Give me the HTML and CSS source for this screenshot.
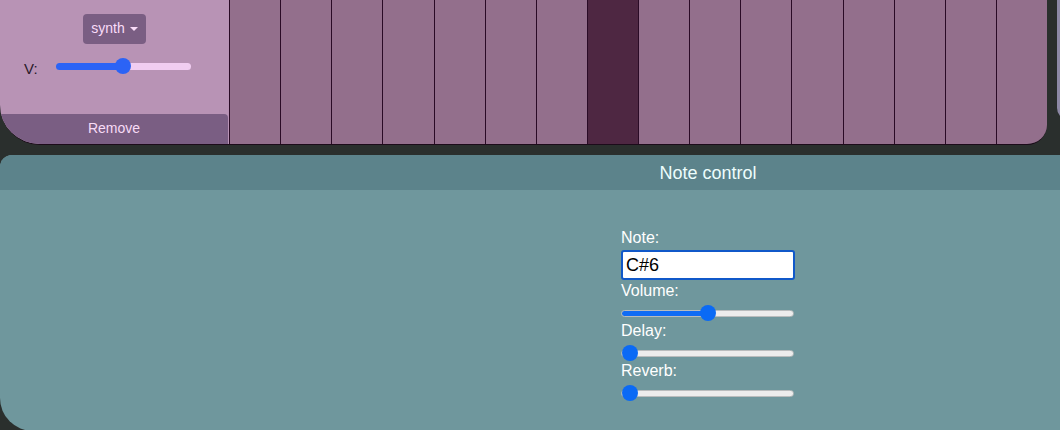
FILE: index.html
```html
<!DOCTYPE html>
<html lang="en">
<head>
<meta charset="utf-8">
<title>Sequencer</title>
<link rel="stylesheet" href="styles.css">
</head>
<body>
<div class="page">
  <div class="tracks">
    <div class="track">
      <div class="pane">
        <div class="pane-top">
          <button class="synth-btn">synth <span class="caret"></span></button>
          <div class="v-row">
            <span class="v-label">V:</span>
            <input class="range range-pink" type="range" min="0" max="100" value="50" style="--v:50%">
          </div>
        </div>
        <button class="remove-btn">Remove</button>
      </div>
      <div class="keys">
        <div class="key"></div>
        <div class="key"></div>
        <div class="key"></div>
        <div class="key"></div>
        <div class="key"></div>
        <div class="key"></div>
        <div class="key"></div>
        <div class="key active"></div>
        <div class="key"></div>
        <div class="key"></div>
        <div class="key"></div>
        <div class="key"></div>
        <div class="key"></div>
        <div class="key"></div>
        <div class="key"></div>
        <div class="key"></div>
      </div>
    </div>
    <div class="track-next"></div>
  </div>

  <div class="note-panel">
    <div class="note-header">Note control</div>
    <div class="note-body">
      <form class="note-form">
        <label class="f-label" for="note">Note:</label>
        <input id="note" class="note-input" type="text" value="C#6" autofocus>
        <label class="f-label">Volume:</label>
        <input class="range range-gray" type="range" min="0" max="100" value="50" style="--v:50%">
        <label class="f-label">Delay:</label>
        <input class="range range-gray" type="range" min="0" max="100" value="0" style="--v:0%">
        <label class="f-label">Reverb:</label>
        <input class="range range-gray" type="range" min="0" max="100" value="0" style="--v:0%">
      </form>
    </div>
  </div>
</div>
</body>
</html>
```

FILE: styles.css
```css
html, body {
  margin: 0;
  padding: 0;
  overflow: hidden;
  background: #2a2f2d;
  font-family: "Liberation Sans", Arial, Helvetica, sans-serif;
}

.page {
  width: 1416px;
}

.tracks {
  display: flex;
  gap: 10px;
  align-items: flex-start;
}

.track {
  display: flex;
  width: 1047px;
  height: 144px;
  border-bottom: 1px solid #1c0b1a;
  border-radius: 0 0 20px 40px;
  overflow: hidden;
  flex: none;
}

.track-next {
  width: 300px;
  height: 120px;
  background: #8d89a6;
  border-radius: 0 0 12px 12px;
  flex: none;
}

.pane {
  width: 229px;
  flex: none;
  background: #b893b5;
  display: flex;
  flex-direction: column;
}

.pane-top {
  flex: 1;
  display: flex;
  flex-direction: column;
  align-items: center;
  padding-top: 14px;
}

.synth-btn {
  width: 63px;
  height: 30px;
  border: none;
  border-radius: 4px;
  background: #7a5e83;
  color: #f9dcf9;
  font-family: inherit;
  font-size: 14px;
  padding: 0 0 2px 0;
  display: flex;
  align-items: center;
  justify-content: center;
  gap: 5px;
}

.caret {
  width: 0;
  height: 0;
  border-left: 4px solid transparent;
  border-right: 4px solid transparent;
  border-top: 4px solid #f9dcf9;
  margin-top: 1px;
}

.v-row {
  align-self: stretch;
  display: flex;
  align-items: center;
  padding-left: 24px;
  margin-top: 11px;
  gap: 18px;
}

.v-label {
  font-size: 15px;
  color: #2b1a2a;
  line-height: 17px;
  padding-top: 5px;
}

.remove-btn {
  height: 30px;
  margin-right: 1px;
  border: none;
  border-radius: 0 4px 0 0;
  background: #7a5e83;
  color: #f7dbf6;
  font-family: inherit;
  font-size: 14px;
  padding: 0 0 2px 0;
}

.keys {
  flex: 1;
  display: flex;
}

.key {
  flex: 1;
  background: #936f8c;
  border-left: 1px solid #2a0b26;
}

.key.active {
  background: #4e2742;
}

/* ranges */
.range {
  -webkit-appearance: none;
  appearance: none;
  background: transparent;
  margin: 0;
  padding: 0;
  height: 16px;
  display: block;
}

.range::-webkit-slider-thumb {
  -webkit-appearance: none;
  appearance: none;
  width: 16px;
  height: 16px;
  border-radius: 50%;
  border: none;
}

.range-pink {
  width: 135px;
}

.range-pink::-webkit-slider-runnable-track {
  height: 7px;
  border-radius: 4px;
  background: linear-gradient(to right, #2b63f6 var(--v), #f1cdf1 var(--v));
}

.range-pink::-webkit-slider-thumb {
  background: #2b63f6;
  margin-top: -4.5px;
}

.range-gray {
  width: 173px;
  margin: 6px 0 1px 0;
}

.range-gray::-webkit-slider-runnable-track {
  height: 7px;
  box-sizing: border-box;
  border-radius: 4px;
  border: 1px solid #b9bcbd;
  background: linear-gradient(to right, #106cf4 var(--v), #ececec var(--v));
}

.range-gray::-webkit-slider-thumb {
  background: #0a6af5;
  margin-top: -5.5px;
}

/* note control */
.note-panel {
  margin-top: 10px;
  width: 1416px;
  height: 276px;
  border-radius: 12px 12px 33px 33px;
  overflow: hidden;
  background: #6f979d;
  display: flex;
  flex-direction: column;
}

.note-header {
  height: 35px;
  flex: none;
  background: #5c838b;
  color: #ecfdfc;
  font-size: 18px;
  display: flex;
  align-items: center;
  justify-content: center;
  padding-top: 2px;
  box-sizing: border-box;
}

.note-body {
  flex: 1;
  display: flex;
  justify-content: center;
  padding-top: 39px;
}

.note-form {
  width: 174px;
  display: flex;
  flex-direction: column;
  margin: 0;
}

.f-label {
  font-size: 16px;
  line-height: 17px;
  color: #ffffff;
}

.note-input {
  width: 174px;
  height: 30px;
  box-sizing: border-box;
  margin: 4px 0 2px 0;
  border: 2px solid #1058c9;
  border-radius: 3px;
  background: #ffffff;
  color: #000000;
  font-family: inherit;
  font-size: 18px;
  padding: 0 3px;
  outline: none;
  caret-color: #000000;
}
```
